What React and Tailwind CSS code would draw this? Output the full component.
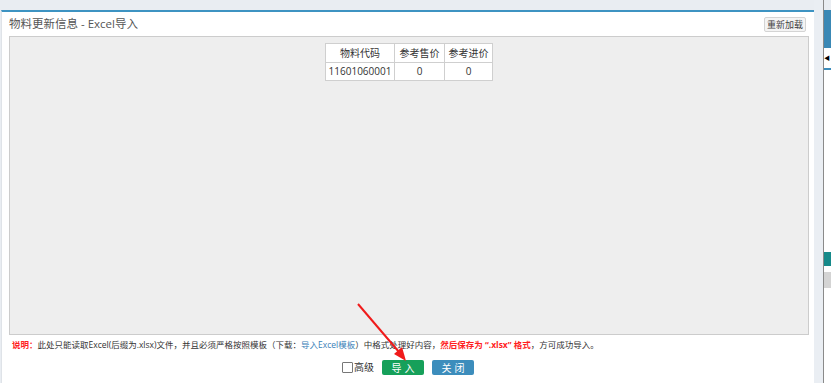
import React from "react";

const font = { fontFamily: '"Open Sans", "Noto Sans CJK SC", sans-serif' };

function HeaderCell({ children, className = "" }) {
  return (
    <th className={"border border-[#cfcfcf] font-normal text-[10px] text-[#333] h-[19px] " + className}>
      {children}
    </th>
  );
}

function DataCell({ children }) {
  return (
    <td className="border border-[#cfcfcf] text-center text-[10px] text-[#333] h-[18px]">{children}</td>
  );
}

export default function App() {
  return (
    <div className="w-[831px] h-[383px] bg-[#e9edf2] flex overflow-hidden relative" style={font}>
      {/* dialog */}
      <div className="ml-[1px] mt-[10px] w-[813px] bg-white border-t-2 border-[#3d93c2] border-l border-l-[#dfe3e8] flex flex-col">
        <div className="h-[24px] flex items-center justify-between pl-[7px] pr-[8px]">
          <span className="text-[11.5px] text-[#555]">物料更新信息 - Excel导入</span>
          <button className="h-[15px] px-[2px] border border-[#d4d4d4] bg-[#f4f4f4] rounded-[2px] text-[9px] leading-none text-[#444]">
            重新加载
          </button>
        </div>

        <div className="ml-[7px] w-[800px] h-[299px] bg-[#eeeeee] border border-[#cccccc] flex justify-center pt-[6px]">
          <table className="bg-white border-collapse self-start">
            <thead>
              <tr>
                <HeaderCell className="w-[69px]">物料代码</HeaderCell>
                <HeaderCell className="w-[50px]">参考售价</HeaderCell>
                <HeaderCell className="w-[48px]">参考进价</HeaderCell>
              </tr>
            </thead>
            <tbody>
              <tr>
                <DataCell>11601060001</DataCell>
                <DataCell>0</DataCell>
                <DataCell>0</DataCell>
              </tr>
            </tbody>
          </table>
        </div>

        <div className="pl-[10px] mt-[3px] text-[8.5px] leading-[14px] text-[#333] whitespace-nowrap">
          <span className="text-[#ff1f1f] font-bold">说明：</span>
          此处只能读取Excel(后缀为.xlsx)文件，并且必须严格按照模板（下载：
          <span className="text-[#3a7fb8]">导入Excel模板</span>
          ）中格式处理好内容，
          <span className="text-[#ff1f1f] font-bold">然后保存为 “.xlsx” 格式</span>
          ，方可成功导入。
        </div>

        <div className="mt-[8px] flex items-center justify-center gap-[8px]">
          <label className="flex items-center text-[10px] text-[#333]">
            <span className="w-[11px] h-[11px] border border-[#777] bg-white rounded-[1px] mr-[1px]" />
            高级
          </label>
          <button className="w-[42px] h-[15px] bg-[#16a05a] rounded-[2px] text-white text-[10px] leading-none tracking-[3px] pl-[3px]">
            导入
          </button>
          <button className="w-[42px] h-[15px] bg-[#3c8dbc] rounded-[2px] text-white text-[10px] leading-none tracking-[3px] pl-[3px]">
            关闭
          </button>
        </div>
      </div>

      {/* right edge of page behind */}
      <div className="w-[9px] bg-[#eaeef3]" />
      <div className="w-[1px] bg-[#8a8a8a]" />
      <div className="flex-1 bg-white flex flex-col">
        <div className="h-[10px] bg-[#e9edf2]" />
        <div className="h-[38px] bg-[#3a88b5]" />
        <div className="h-[20px] flex items-center text-[6px] text-black">◀</div>
        <div className="h-[2px] bg-[#3c8dbc]" />
        <div className="h-[182px]" />
        <div className="h-[14px] bg-[#168a8a]" />
        <div className="h-[6px]" />
        <div className="h-[16px] bg-[#d4d4d4]" />
      </div>

      {/* red annotation arrow */}
      <svg className="absolute left-0 top-0 pointer-events-none" width="831" height="383">
        <line x1="358" y1="304" x2="399" y2="352" stroke="#f01b1b" strokeWidth="2" />
        <polygon points="406,361 394,354 402,347" fill="#f01b1b" />
      </svg>
    </div>
  );
}
